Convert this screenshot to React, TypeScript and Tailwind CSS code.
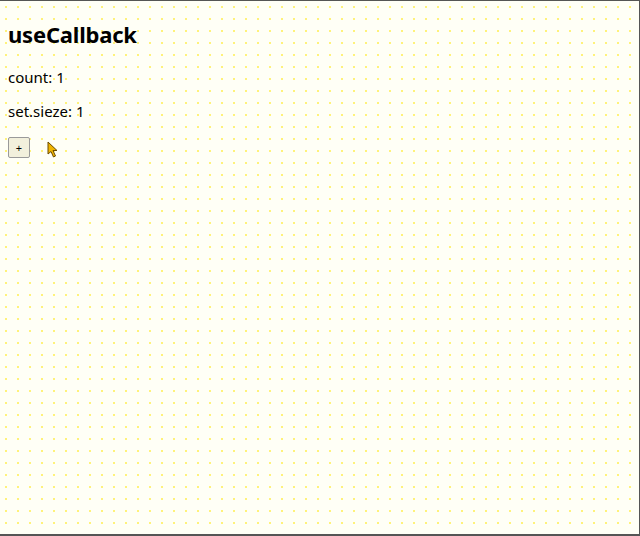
import React, { useState } from "react";

const App: React.FC = () => {
  const [count, setCount] = useState(1);

  return (
    <div
      className="h-[536px] w-[640px] border-t border-r border-b-2 border-[#555] bg-[#fffff6] bg-[radial-gradient(#fff27a_0.8px,transparent_1px)] bg-[size:12px_12px] px-2 pt-[18px] text-black"
      style={{ fontFamily: '"Noto Sans", "Open Sans", sans-serif' }}
    >
      <h1 className="text-[22px] leading-[30px] font-bold tracking-[-0.2px]">useCallback</h1>

      <p className="mt-[18px] text-[15px] leading-[20px]">count: {count}</p>
      <p className="mt-[14px] text-[15px] leading-[20px]">set.sieze: 1</p>

      {/* Button + cursor */}
      <div className="mt-[16px] flex items-start gap-[17px]">
        <button
          onClick={() => setCount(count + 1)}
          className="flex h-[21px] w-[22px] items-center justify-center rounded-[2px] border border-[#9a9a9a] bg-[#f2f0dc] text-[11px] leading-none"
        >
          +
        </button>
        <svg className="mt-[4px]" width="12" height="17" viewBox="0 0 12 17">
          <path
            d="M1 1 L1 13 L4 10.5 L6.5 16 L8.5 15 L6 9.5 L10 9.5 Z"
            fill="#f0b400"
            stroke="#6b4a00"
            strokeWidth="1"
            strokeLinejoin="round"
          />
        </svg>
      </div>
    </div>
  );
};

export default App;
